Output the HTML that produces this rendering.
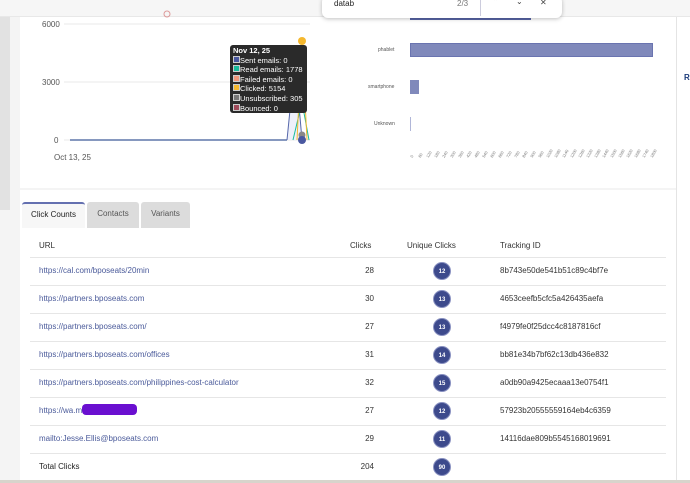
<!DOCTYPE html>
<html><head><style>
*{margin:0;padding:0;box-sizing:border-box}
body{width:690px;height:483px;overflow:hidden;background:#f4f4f4;font-family:"Liberation Sans",sans-serif;position:relative}
.a{position:absolute}
.row{position:absolute;left:30px;width:636px;height:28px;border-top:1px solid #e6e6e6;font-size:8px;color:#333}
.row span{position:absolute;top:8px}
.u{left:9px;color:#4a5a9a}
.c{right:292px}
.b{left:403px;top:4px!important;width:18px;height:18px;border-radius:50%;background:#3d4a8c;color:#fff;font-size:6px;text-align:center;line-height:18px;font-weight:bold;border:1px solid #8890c0}
.id{left:470px}
.tk{position:absolute;top:156px;font-size:4px;color:#777;transform:rotate(-60deg);transform-origin:left top;white-space:nowrap}
</style></head><body>
<div class="a" style="left:0;top:0;width:10px;height:210px;background:#e2e2e2"></div>
<div class="a" style="left:0;top:0;width:690px;height:17px;background:#f6f6f6;border-bottom:1px solid #e8e8e8"></div>
<div class="a" style="left:20px;top:17px;width:656px;height:171px;background:#fff"></div>
<div class="a" style="left:20px;top:190px;width:656px;height:290px;background:#fff"></div>
<div class="a" style="left:676px;top:17px;width:1px;height:463px;background:#e4e4e4"></div>
<div class="a" style="left:677px;top:17px;width:13px;height:463px;background:#fff"></div>
<div class="a" style="left:684px;top:73px;font-size:8px;font-weight:bold;color:#1a3a7a">R</div>
<div class="a" style="left:0;top:480px;width:690px;height:3px;background:#d8d4cc"></div>
<svg class="a" style="left:0;top:0" width="330" height="190">
<g stroke="#e8e8e8"><line x1="64" y1="24" x2="310" y2="24"/><line x1="64" y1="82" x2="310" y2="82"/><line x1="64" y1="140" x2="310" y2="140"/></g>
<g font-size="8" fill="#555" font-family="Liberation Sans"><text x="42" y="27">6000</text><text x="42" y="85">3000</text><text x="54" y="143">0</text><text x="54" y="160">Oct 13, 25</text></g>
<line x1="70" y1="140" x2="287" y2="140" stroke="#3d5a99" stroke-width="1.2"/>
<path d="M287 140 L295 60 L302 140" fill="#eef0fa" stroke="#5566aa"/>
<path d="M293 140 L302 102 L309 140" fill="none" stroke="#1abc9c"/>
<path d="M297 140 L302 41 L307 140" fill="none" stroke="#f5b82e"/>
<circle cx="302" cy="41" r="4" fill="#f5b82e"/>
<circle cx="302" cy="106" r="4" fill="#123"/>
<circle cx="302" cy="135" r="3.5" fill="#888"/>
<circle cx="302" cy="140" r="4" fill="#4a58a0"/>
<circle cx="167" cy="14" r="3" fill="none" stroke="#d99"/>
</svg>
<div class="a" style="left:230px;top:45px;width:77px;height:68px;background:#2a2a2a;border-radius:3px;color:#fff;font-size:7.5px;line-height:8.6px;padding:2px 3px">
<b>Nov 12, 25</b><br>
<span style="display:inline-block;width:7px;height:7px;background:#4a58a0;border:1px solid #ccc"></span>Sent emails: 0<br>
<span style="display:inline-block;width:7px;height:7px;background:#1abc9c;border:1px solid #ccc"></span>Read emails: 1778<br>
<span style="display:inline-block;width:7px;height:7px;background:#f0977a;border:1px solid #ccc"></span>Failed emails: 0<br>
<span style="display:inline-block;width:7px;height:7px;background:#f5b82e;border:1px solid #ccc"></span>Clicked: 5154<br>
<span style="display:inline-block;width:7px;height:7px;background:#777;border:1px solid #ccc"></span>Unsubscribed: 305<br>
<span style="display:inline-block;width:7px;height:7px;background:#a04a5a;border:1px solid #ccc"></span>Bounced: 0</div>
<div class="a" style="left:410px;top:17px;width:121px;height:3px;background:#5a66a8"></div>
<div class="a" style="left:410px;top:43px;width:243px;height:14px;background:#8089bb;border:1px solid #6a74b0"></div>
<div class="a" style="left:410px;top:80px;width:9px;height:14px;background:#8089bb"></div>
<div class="a" style="left:410px;top:117px;width:1px;height:14px;background:#b0b6d8"></div>
<div class="a" style="left:378px;top:47px;font-size:5px;color:#555">phablet</div>
<div class="a" style="left:368px;top:84px;font-size:5px;color:#555">smartphone</div>
<div class="a" style="left:374px;top:121px;font-size:5px;color:#555">Unknown</div>
<span class="tk" style="left:409px">0</span><span class="tk" style="left:417px">60</span><span class="tk" style="left:425px">120</span><span class="tk" style="left:433px">180</span><span class="tk" style="left:441px">240</span><span class="tk" style="left:449px">300</span><span class="tk" style="left:457px">360</span><span class="tk" style="left:465px">420</span><span class="tk" style="left:473px">480</span><span class="tk" style="left:481px">540</span><span class="tk" style="left:489px">600</span><span class="tk" style="left:497px">660</span><span class="tk" style="left:505px">720</span><span class="tk" style="left:513px">780</span><span class="tk" style="left:521px">840</span><span class="tk" style="left:529px">900</span><span class="tk" style="left:537px">960</span><span class="tk" style="left:545px">1020</span><span class="tk" style="left:553px">1080</span><span class="tk" style="left:561px">1140</span><span class="tk" style="left:569px">1200</span><span class="tk" style="left:577px">1260</span><span class="tk" style="left:585px">1320</span><span class="tk" style="left:593px">1380</span><span class="tk" style="left:601px">1440</span><span class="tk" style="left:609px">1500</span><span class="tk" style="left:617px">1560</span><span class="tk" style="left:625px">1620</span><span class="tk" style="left:633px">1680</span><span class="tk" style="left:641px">1740</span><span class="tk" style="left:649px">1800</span>
<div class="a" style="left:322px;top:-4px;width:240px;height:22px;background:#fff;border-radius:6px;box-shadow:0 1px 4px rgba(0,0,0,.25);font-size:8px;color:#222">
<span class="a" style="left:12px;top:3px">datab</span><span class="a" style="left:135px;top:3px;color:#777">2/3</span>
<span class="a" style="left:158px;top:0;width:1px;height:20px;background:#ccd"></span>
<span class="a" style="left:170px;top:1px;color:#444">⌃</span><span class="a" style="left:194px;top:1px;color:#444">⌄</span><span class="a" style="left:218px;top:2px;color:#444">✕</span></div>
<div class="a" style="left:22px;top:202px;width:63px;height:26px;background:#f7f7f7;border-top:2px solid #6470b0;border-radius:3px 3px 0 0;font-size:8px;color:#222;text-align:center;line-height:22px">Click Counts</div>
<div class="a" style="left:87px;top:202px;width:52px;height:26px;background:#dcdcdc;border-radius:3px 3px 0 0;font-size:8px;color:#555;text-align:center;line-height:24px">Contacts</div>
<div class="a" style="left:141px;top:202px;width:49px;height:26px;background:#dcdcdc;border-radius:3px 3px 0 0;font-size:8px;color:#555;text-align:center;line-height:24px">Variants</div>
<div class="row" style="top:229px;border-top:none"><span class="u" style="color:#333;top:12px">URL</span><span style="left:320px;top:12px">Clicks</span><span style="left:377px;top:12px">Unique Clicks</span><span style="left:470px;top:12px">Tracking ID</span></div>
<div class="row" style="top:257px"><span class="u">https://cal.com/bposeats/20min</span><span class="c">28</span><span class="b">12</span><span class="id">8b743e50de541b51c89c4bf7e</span></div>
<div class="row" style="top:285px"><span class="u">https://partners.bposeats.com</span><span class="c">30</span><span class="b">13</span><span class="id">4653ceefb5cfc5a426435aefa</span></div>
<div class="row" style="top:313px"><span class="u">https://partners.bposeats.com/</span><span class="c">27</span><span class="b">13</span><span class="id">f4979fe0f25dcc4c8187816cf</span></div>
<div class="row" style="top:341px"><span class="u">https://partners.bposeats.com/offices</span><span class="c">31</span><span class="b">14</span><span class="id">bb81e34b7bf62c13db436e832</span></div>
<div class="row" style="top:369px"><span class="u">https://partners.bposeats.com/philippines-cost-calculator</span><span class="c">32</span><span class="b">15</span><span class="id">a0db90a9425ecaaa13e0754f1</span></div>
<div class="row" style="top:397px"><span class="u">https://wa.m</span><span style="left:52px;top:6px;width:55px;height:11px;background:#6a0fd0;border-radius:4px"></span><span class="c">27</span><span class="b">12</span><span class="id">57923b20555559164eb4c6359</span></div>
<div class="row" style="top:425px"><span class="u">mailto:Jesse.Ellis@bposeats.com</span><span class="c">29</span><span class="b">11</span><span class="id">14116dae809b5545168019691</span></div>
<div class="row" style="top:453px"><span class="u" style="color:#222">Total Clicks</span><span class="c">204</span><span class="b">90</span></div>
</body></html>
